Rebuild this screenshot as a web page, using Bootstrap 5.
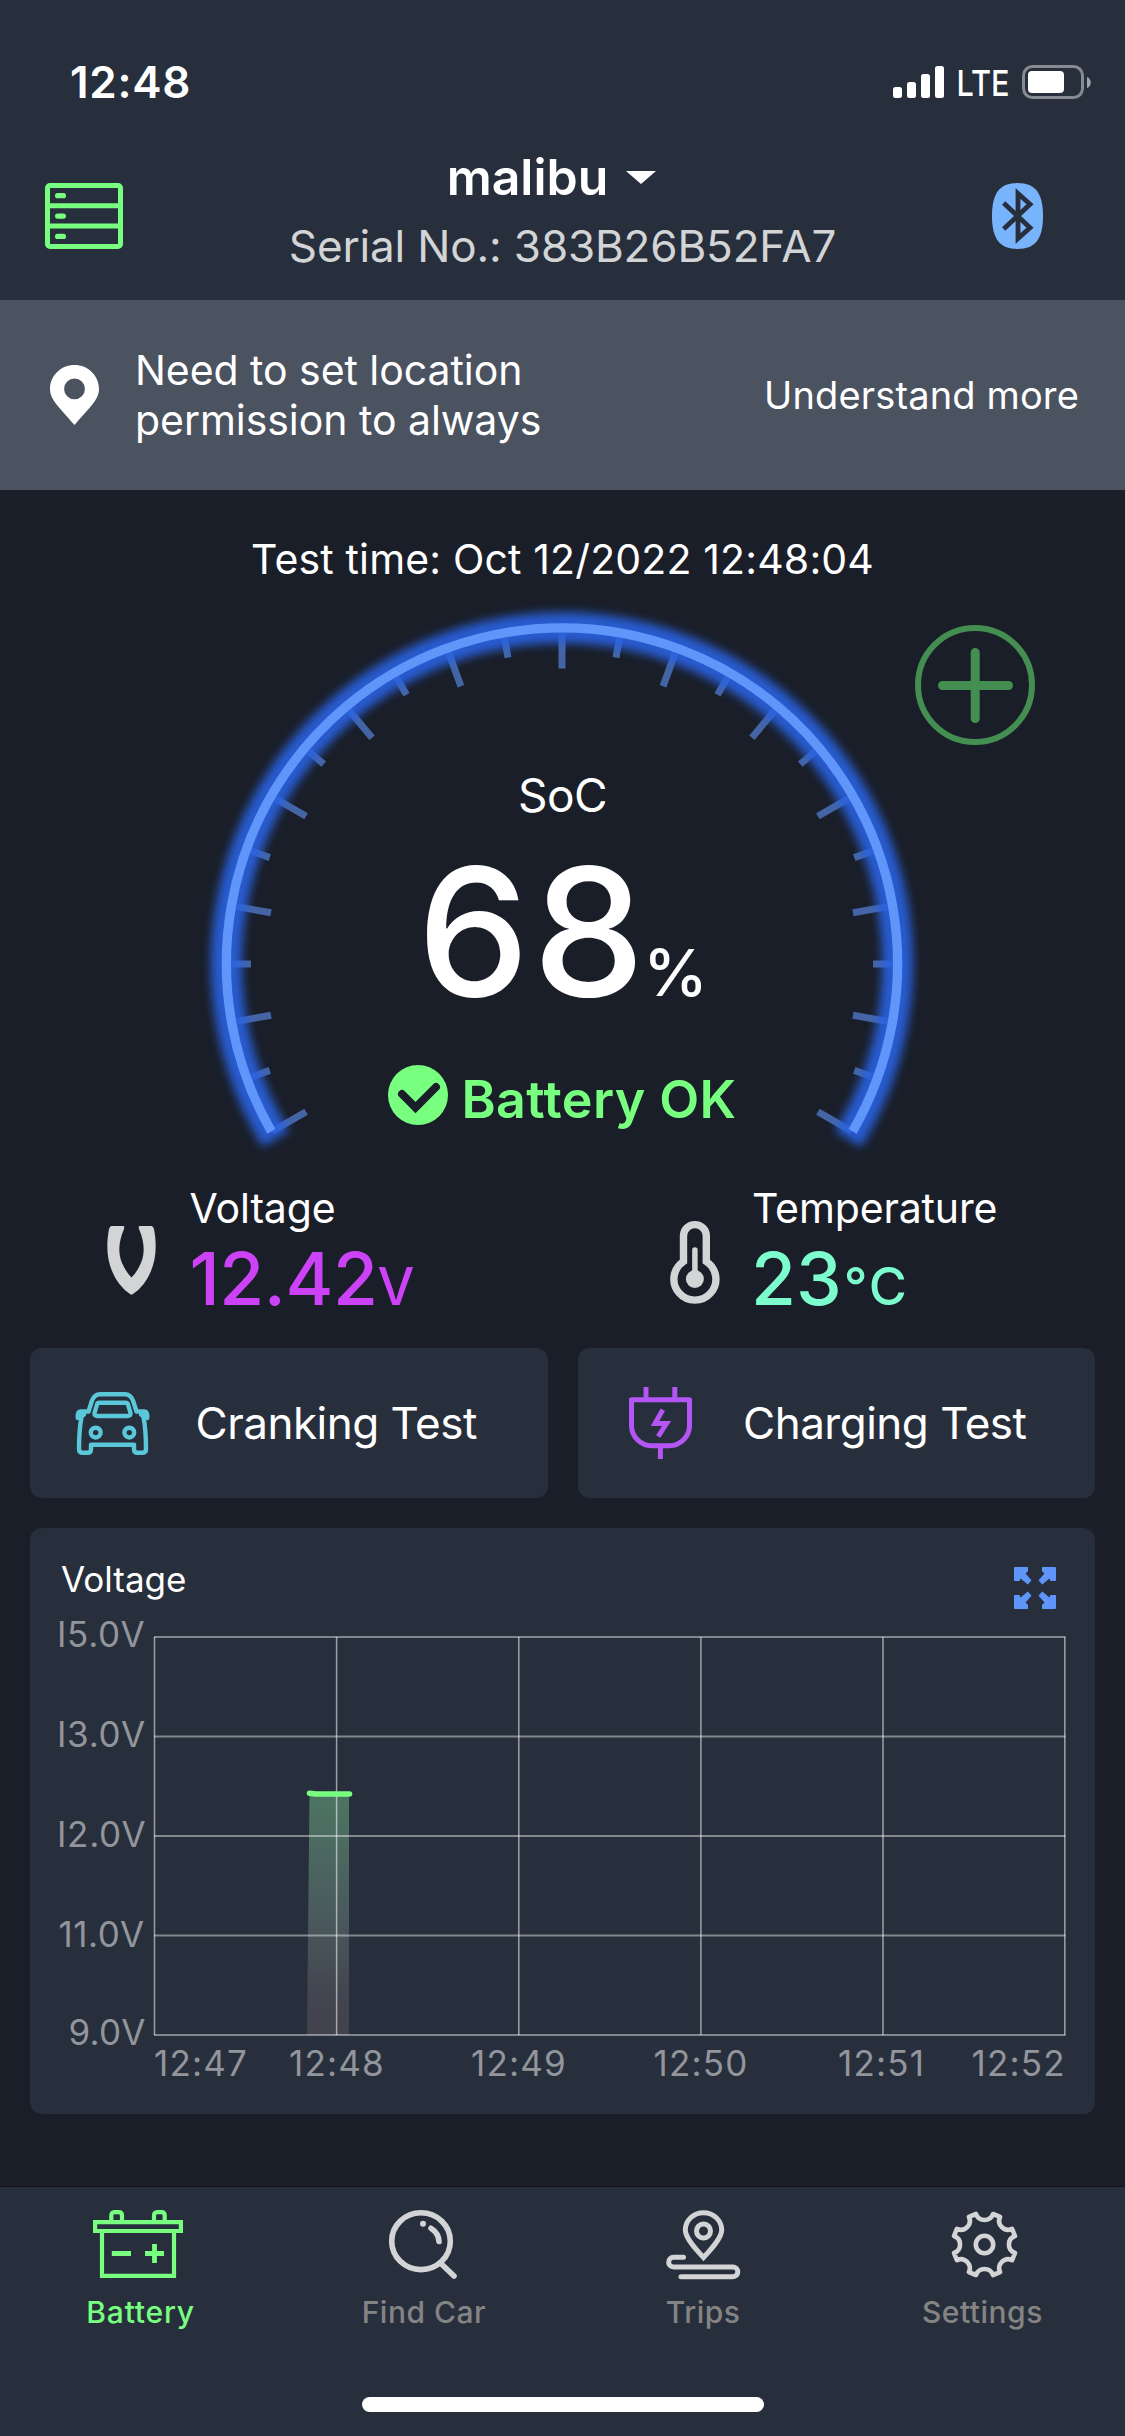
<!DOCTYPE html>
<html lang="en">
<head>
<meta charset="utf-8">
<meta name="viewport" content="width=device-width, initial-scale=1">
<title>Battery monitor</title>
<link href="https://cdn.jsdelivr.net/npm/bootstrap@5.3.0/dist/css/bootstrap.min.css" rel="stylesheet">
<style>
  :root { --panel:#282f3c; --page:#1a1e28; --ok:#78ff80; --soft:#d2d4d6; }
  body { background:var(--page); color:#fff; font-family:Inter,"Liberation Sans",sans-serif; width:1125px; height:2436px; overflow:hidden; }
  svg { display:block; flex:none; overflow:visible; }
  .panel-bg { background:var(--panel); }
  .app-head { height:300px; }
  .status-row { height:132px; padding:32px 34px 0 70px; }
  .clock { font-size:44px; font-weight:600; letter-spacing:.7px; line-height:60px; margin-top:20px; }
  .signal { margin-top:32px; }
  .title-row { height:168px; }
  .side { width:165px; }
  .side-start { padding-left:45px; }
  .side-end { padding-right:82px; }
  .title-block { padding-top:15px; }
  .car-name { font-size:50px; font-weight:600; line-height:60px; padding-right:22px; gap:18px; }
  .serial { font-size:44px; line-height:50px; letter-spacing:-.15px; color:var(--soft); margin-top:14px; }
  .notice { height:190px; background:#4b5260; padding:0 46px 0 50px; }
  .notice-text { font-size:41px; line-height:50px; margin-left:36px; letter-spacing:-.05px; }
  .notice-link { font-size:38px; letter-spacing:.15px; }
  .test-time { padding-top:44px; height:94px; font-size:41px; line-height:50px; letter-spacing:.15px; }
  .gauge { height:584px; padding-top:181px; }
  .gauge-dial { position:absolute; left:0; top:0; }
  .soc-label { font-size:46px; line-height:60px; letter-spacing:-.5px; }
  .soc-value { height:140px; margin-top:37px; line-height:140px; }
  .soc-number { font-size:178px; font-weight:500; letter-spacing:3.5px; }
  .soc-unit { font-size:65px; font-weight:500; margin-left:-5px; }
  .verdict { height:60px; margin-top:68px; gap:13px; color:var(--ok); font-size:52px; font-weight:600; letter-spacing:.4px; line-height:60px; }
  .verdict svg { margin-bottom:10px; }
  .metrics { height:180px; }
  .metric { padding:15px 0 0 106.5px; }
  .metric-icon { width:83px; height:135px; padding-top:9px; }
  .clamp-icon { margin-top:34px; }
  .thermo-icon { margin:29px 0 0 1px; }
  .metric-label { font-size:41px; line-height:50px; letter-spacing:-.14px; }
  .metric-value { font-size:73px; font-weight:500; line-height:80px; margin-top:5.5px; letter-spacing:-.46px; }
  .metric-value span { font-size:52px; letter-spacing:1px; }
  .volt { color:#cc42f7; }
  .temp { color:#7dfdcd; margin-left:-1px; letter-spacing:0; }
  .temp span { margin-left:2px; letter-spacing:2px; }
  .tests { padding:0 30px; gap:30px; }
  .test-btn { flex:1 1 0; height:150px; border:0; border-radius:12px; padding:0 0 0 45px; background:var(--panel); color:#fff; font-size:44px; letter-spacing:-.5px; gap:45.5px; }
  .test-icon { width:75px; }
  .chart-card { margin:30px 30px 73px; height:586px; background:var(--panel); border:0; border-radius:12px; color:#fff; }
  .chart-head { height:88px; padding:30px 39px 0 31px; }
  .chart-title { font-size:35px; line-height:43px; }
  .chart-head svg { margin-top:9px; }
  .axis { font-size:35px; fill:#92959b; }
  .tabs { height:249px; box-shadow:0 -1px 0 #12151c; }
  .tab-item { flex:1 1 0; padding:23px 0 0; border:0; border-radius:0; color:#848484; font-size:30px; font-weight:500; line-height:40px; letter-spacing:.5px; }
  .tab-item.current { color:var(--ok); letter-spacing:.8px; }
  .tab-icon { height:81.5px; }
  .tab-row { height:210px; }
  .home-bar { width:402px; height:15px; border-radius:8px; background:#fff; }
</style>
<script src="https://cdn.jsdelivr.net/npm/bootstrap@5.3.0/dist/js/bootstrap.bundle.min.js"></script>
</head>
<body>
<header class="app-head panel-bg">
  <div class="status-row d-flex justify-content-between align-items-start">
    <div class="clock">12:48</div>
    <svg class="signal" width="198" height="36" viewBox="893 64 198 36">
      <g fill="#fff">
        <rect x="893" y="87" width="9" height="11" rx="2.5"/><rect x="907" y="82" width="9" height="16" rx="2.5"/>
        <rect x="921" y="74" width="9" height="24" rx="2.5"/><rect x="935" y="66" width="9" height="32" rx="2.5"/>
        <text x="956.5" y="96" font-size="36" font-weight="500" textLength="53" lengthAdjust="spacingAndGlyphs">LTE</text>
        <rect x="1028" y="71" width="36" height="22" rx="4"/>
      </g>
      <rect x="1023.5" y="66.5" width="59" height="31" rx="9" fill="none" stroke="#868a92" stroke-width="3"/>
      <path d="M1087 77c5 1.500 5 9.500 0 11z" fill="#a0a3a9"/>
    </svg>
  </div>
  <div class="title-row d-flex justify-content-between">
    <div class="side side-start d-flex align-items-center">
      <svg width="78" height="66" viewBox="0 0 78 66" fill="none" stroke="#78ff80" stroke-width="5">
        <rect x="2.500" y="2.500" width="73" height="61" rx="2.500"/><path d="M2 22.700H76M2 43H76"/>
        <g fill="#78ff80" stroke="none"><rect x="10" y="10" width="11" height="5.300" rx="2.600"/><rect x="10" y="30.400" width="11" height="5.300" rx="2.600"/><rect x="10" y="50.800" width="11" height="5.300" rx="2.600"/></g>
      </svg>
    </div>
    <div class="title-block text-center">
      <div class="car-name d-flex justify-content-center align-items-center">malibu
        <svg width="30" height="13" viewBox="0 0 30 13"><path d="M0 0H30L15 13z" fill="#fff"/></svg>
      </div>
      <div class="serial">Serial No.: 383B26B52FA7</div>
    </div>
    <div class="side side-end d-flex align-items-center justify-content-end">
      <svg width="51" height="66" viewBox="992 183 51 66">
        <path d="M1017.500 183C1036 183 1043 194 1043 216s-7 33-25.500 33S992 238 992 216s7-33 25.500-33z" fill="#78b4fb"/>
        <path d="M1003.700 203L1030 227.700L1018 238.500V193.500L1030 204.300L1003.700 229" fill="none" stroke="#282f3c" stroke-width="4.800"/>
      </svg>
    </div>
  </div>
</header>

<section class="notice d-flex align-items-center">
  <svg width="49" height="60" viewBox="0 0 49 60"><path fill-rule="evenodd" fill="#fff" d="M24.500 0C11 0 0 10.500 0 24 0 35 10 43 24.500 60 39 43 49 35 49 24 49 10.500 38 0 24.500 0zM24.500 13.500a10.400 10.400 0 1 1 0 20.800a10.400 10.400 0 1 1 0-20.800z"/></svg>
  <div class="notice-text">Need to set location<br>permission to always</div>
  <div class="notice-link ms-auto">Understand more</div>
</section>

<main>
  <div class="test-time text-center">Test time: Oct 12/2022 12:48:04</div>
  <section class="gauge position-relative text-center">
    <svg class="gauge-dial" width="1125" height="584" viewBox="0 584 1125 584" fill="none">
      <defs><filter id="halo" x="-10%" y="-10%" width="120%" height="120%"><feGaussianBlur stdDeviation="5"/></filter></defs>
      <g id="ticks" stroke="#4465a5" stroke-width="7"></g>
      <path d="M275.900 1138.900A335.600 335.600 0 1 1 848.100 1138.900" stroke="#2a62e2" stroke-opacity=".9" stroke-width="31" filter="url(#halo)"/>
      <path d="M271.400 1131.300A335.600 335.600 0 1 1 852.600 1131.300" stroke="#6096fa" stroke-width="9.300"/>
      <g stroke="#438e50"><circle cx="975" cy="685" r="57" stroke-width="6"/><path d="M942.500 685.500H1008.500M975.200 652.500V718.500" stroke-width="9" stroke-linecap="round"/></g>
    </svg>
    <div class="soc-label position-relative">SoC</div>
    <div class="soc-value position-relative d-flex justify-content-center align-items-baseline"><span class="soc-number">68</span><span class="soc-unit">%</span></div>
    <div class="verdict position-relative d-flex justify-content-center align-items-center">
      <svg width="60" height="60" viewBox="0 0 60 60"><circle cx="30" cy="30" r="30" fill="#78ff80"/><path d="M14 29L27.500 42.500L48 22" fill="none" stroke="#1a1e28" stroke-width="8" stroke-linecap="round"/></svg>
      <span>Battery OK</span>
    </div>
  </section>

  <section class="metrics row g-0">
    <div class="col-6 metric d-flex">
      <div class="metric-icon"><svg class="clamp-icon" width="49" height="69" viewBox="0 0 49 69"><path fill="#d2d4d6" d="M4.500 0H16Q18 0 17 3C11 17 10.500 30 17 41Q20 47 24.500 51.500Q29 47 32 41C38.500 30 38 17 32 3Q31 0 33 0H44.500Q46 0 47 3C50 19 49 33 44 45Q38 60 26 68Q24.500 69 23 68Q11 60 5 45C0 33-1 19 2 3Q3 0 4.500 0z"/></svg></div>
      <div><div class="metric-label">Voltage</div><div class="metric-value volt">12.42<span>V</span></div></div>
    </div>
    <div class="col-6 metric d-flex">
      <div class="metric-icon"><svg class="thermo-icon" width="50" height="82" viewBox="0 0 50 82" fill="none" stroke="#d2d4d6" stroke-width="7.400"><path d="M13.500 40.500V15a11.400 11.400 0 0 1 22.800 0V40.500A21 21 0 1 1 13.500 40.500z"/><path d="M24.900 29V50" stroke-width="5.500" stroke-linecap="round"/><circle cx="24.900" cy="58" r="9" fill="#d2d4d6" stroke="none"/></svg></div>
      <div><div class="metric-label">Temperature</div><div class="metric-value temp">23<span>°C</span></div></div>
    </div>
  </section>

  <section class="tests d-flex">
    <button class="test-btn btn d-flex align-items-center">
      <span class="test-icon"><svg width="75" height="63" viewBox="0 0 75 63" fill="none" stroke="#5ac8d8" stroke-width="4.400" stroke-linejoin="round" stroke-linecap="round">
        <path d="M9 22.500L2.800 26Q2 19.500 6 19.500H13.500L17 8.500Q19.500 2.200 25 2.200H50Q55.500 2.200 58 8.500L61.500 19.500H69Q73 19.500 72.200 26L66 22.500"/>
        <path d="M6.500 25Q4 38 4 57Q4 60.800 8 60.800H12.500Q16 60.800 16 57V52.800H59V57Q59 60.800 62.500 60.800H67Q71 60.800 71 57Q71 38 68.500 25"/>
        <path d="M24.500 10.800H50.500Q52.500 10.800 53 12.500L55.500 21Q56 24 52.500 24H22.500Q19 24 19.500 21L22 12.500Q22.500 10.800 24.500 10.800z"/>
        <circle cx="20.700" cy="40.600" r="4.900"/><circle cx="54.300" cy="40.600" r="4.900"/></svg></span>
      <span>Cranking Test</span>
    </button>
    <button class="test-btn btn d-flex align-items-center">
      <span class="test-icon"><svg class="mx-auto" width="63" height="72" viewBox="0 0 63 72" fill="none" stroke="#b455f6" stroke-width="5"><path d="M2.500 12.800H60.500V38.500A20.300 20.300 0 0 1 40.200 58.800H22.800A20.300 20.300 0 0 1 2.500 38.500z" stroke-linejoin="round"/><path d="M17 0V12M45.800 0V12M31.400 59V72M33.800 22.700L26 36.600H37.500L29.200 49.500"/></svg></span>
      <span>Charging Test</span>
    </button>
  </section>

  <section class="chart-card card">
    <div class="chart-head d-flex justify-content-between align-items-start">
      <div class="chart-title">Voltage</div>
      <svg width="42" height="42" viewBox="0 0 42 42" fill="#6096fa"><defs><path id="arrow" d="M1 0H13.500Q14 0 14 1V4L11.500 6.500L17.500 13.200L13.800 17.500L6.500 11.500L5.500 14H1Q0 14 0 13V1Q0 0 1 0z"/></defs><use href="#arrow"/><use href="#arrow" transform="matrix(-1 0 0 1 42 0)"/><use href="#arrow" transform="matrix(1 0 0 -1 0 42)"/><use href="#arrow" transform="rotate(180 21 21)"/></svg>
    </div>
    <svg width="1065" height="498" viewBox="30 1616 1065 498">
      <defs><linearGradient id="fade" x1="0" y1="0" x2="0" y2="1"><stop offset="0" stop-color="#4d7563"/><stop offset=".5" stop-color="#4a5a5d"/><stop offset=".85" stop-color="#42444f"/><stop offset="1" stop-color="#42424d"/></linearGradient></defs>
      <path d="M309.500 1794H349V2035H307z" fill="url(#fade)"/>
      <g stroke="#fff" stroke-opacity=".42" stroke-width="2"><path d="M154 1637H1065.500M154 1736.500H1065.500M154 1836H1065.500M154 1935.500H1065.500M154 2035H1065.500"/></g>
      <g stroke="#fff" stroke-opacity=".54" stroke-width="1.500"><path d="M154.500 1637V2035M336.600 1637V2035M518.800 1637V2035M700.900 1637V2035M883 1637V2035M1064.800 1637V2035"/></g>
      <path d="M309.500 1793.200L316 1794H342L349.500 1794" stroke="#78ff80" stroke-width="5.600" stroke-linecap="round" stroke-linejoin="round" fill="none"/>
      <g class="axis">
        <text x="57" y="1647" letter-spacing=".7">I5.0V</text><text x="57" y="1747" letter-spacing=".7">I3.0V</text><text x="57" y="1846.500" letter-spacing=".7">I2.0V</text><text x="58.500" y="1946.500" letter-spacing=".5">11.0V</text><text x="68.500" y="2045" letter-spacing=".3">9.0V</text>
        <g letter-spacing="1.200"><text x="154" y="2076">12:47</text><text x="289" y="2076">12:48</text><text x="471" y="2076">12:49</text><text x="653.500" y="2076">12:50</text><text x="838" y="2076">12:51</text><text x="971.500" y="2076">12:52</text></g>
      </g>
    </svg>
  </section>
</main>

<footer class="tabs panel-bg">
  <nav class="tab-row d-flex text-center">
    <a class="tab-item current btn">
      <div class="tab-icon pe-1"><svg class="mx-auto" width="90" height="68" viewBox="1 0 90 68" fill="none" stroke="#78ff80" stroke-width="4.200"><path d="M2.100 12.100H87.900V21H2.100zM9 21V65.900H81V21M18.300 12V5.500Q18.300 2.100 21.500 2.100H25.800Q29 2.100 29 5.500V12M61 12V5.500Q61 2.100 64.200 2.100H68.500Q71.700 2.100 71.700 5.500V12"/><path d="M18.800 43.500H38M52 43.500H71M61.500 34V53" stroke-width="4.800"/></svg></div>Battery
    </a>
    <a class="tab-item btn">
      <div class="tab-icon ps-1"><svg class="mx-auto" width="69" height="69" viewBox="0 0 69 69" fill="none" stroke="#d2d4d6" stroke-width="5.600" stroke-linecap="round"><ellipse cx="32" cy="31.200" rx="29.300" ry="28.400"/><path d="M52.500 54L65 66M42 18.300Q49.700 23 50 31.500"/><circle cx="34" cy="13.700" r="3" fill="#d2d4d6" stroke="none"/></svg></div><span class="ps-1">Find Car</span>
    </a>
    <a class="tab-item btn">
      <div class="tab-icon"><svg class="mx-auto" width="75" height="69" viewBox="0 0 75 69" fill="none" stroke="#d2d4d6" stroke-width="5"><path d="M37.500 47.500C30 39.500 19.300 28 19.300 20A18.200 17.300 0 0 1 55.700 20C55.700 28 45 39.500 37.500 47.500z"/><circle cx="37.500" cy="21" r="7"/><path d="M17.500 47.300H7.500A4.800 4.800 0 0 0 7.500 57H67A4.800 4.800 0 0 1 67 66.700H15" stroke-linecap="round"/></svg></div>Trips
    </a>
    <a class="tab-item btn">
      <div class="tab-icon"><svg class="mx-auto" width="69" height="69" viewBox="-34.500 -34.500 69 69" fill="none" stroke="#d2d4d6" stroke-width="4.600" stroke-linejoin="round"><path d="M8.500-30.500L15.600-27.600A9 9 0 0 0 27.600-15.600L30.500-8.500A9 9 0 0 0 30.500 8.500L27.600 15.600A9 9 0 0 0 15.600 27.600L8.500 30.500A9 9 0 0 0-8.500 30.500L-15.600 27.600A9 9 0 0 0-27.600 15.600L-30.500 8.500A9 9 0 0 0-30.500-8.500L-27.600-15.600A9 9 0 0 0-15.600-27.600L-8.500-30.500A9 9 0 0 0 8.500-30.500z"/><circle r="8.700"/></svg></div><span class="pe-1">Settings</span>
    </a>
  </nav>
  <div class="home-bar mx-auto"></div>
</footer>
<script>
  // Dial scale: 25 marks every 10 degrees from -120 to 120, the even ones longer.
  const marks = document.getElementById('ticks');
  for (let i = 0; i <= 24; i++) {
    const t = (-120 + i * 10) * Math.PI / 180, inner = i % 2 ? 311 : 295.5;
    const line = document.createElementNS('http://www.w3.org/2000/svg', 'path');
    const at = r => (562 + r * Math.sin(t)).toFixed(2) + ' ' + (964 - r * Math.cos(t)).toFixed(2);
    line.setAttribute('d', 'M' + at(inner) + 'L' + at(335));
    marks.append(line);
  }
</script>
</body>
</html>
